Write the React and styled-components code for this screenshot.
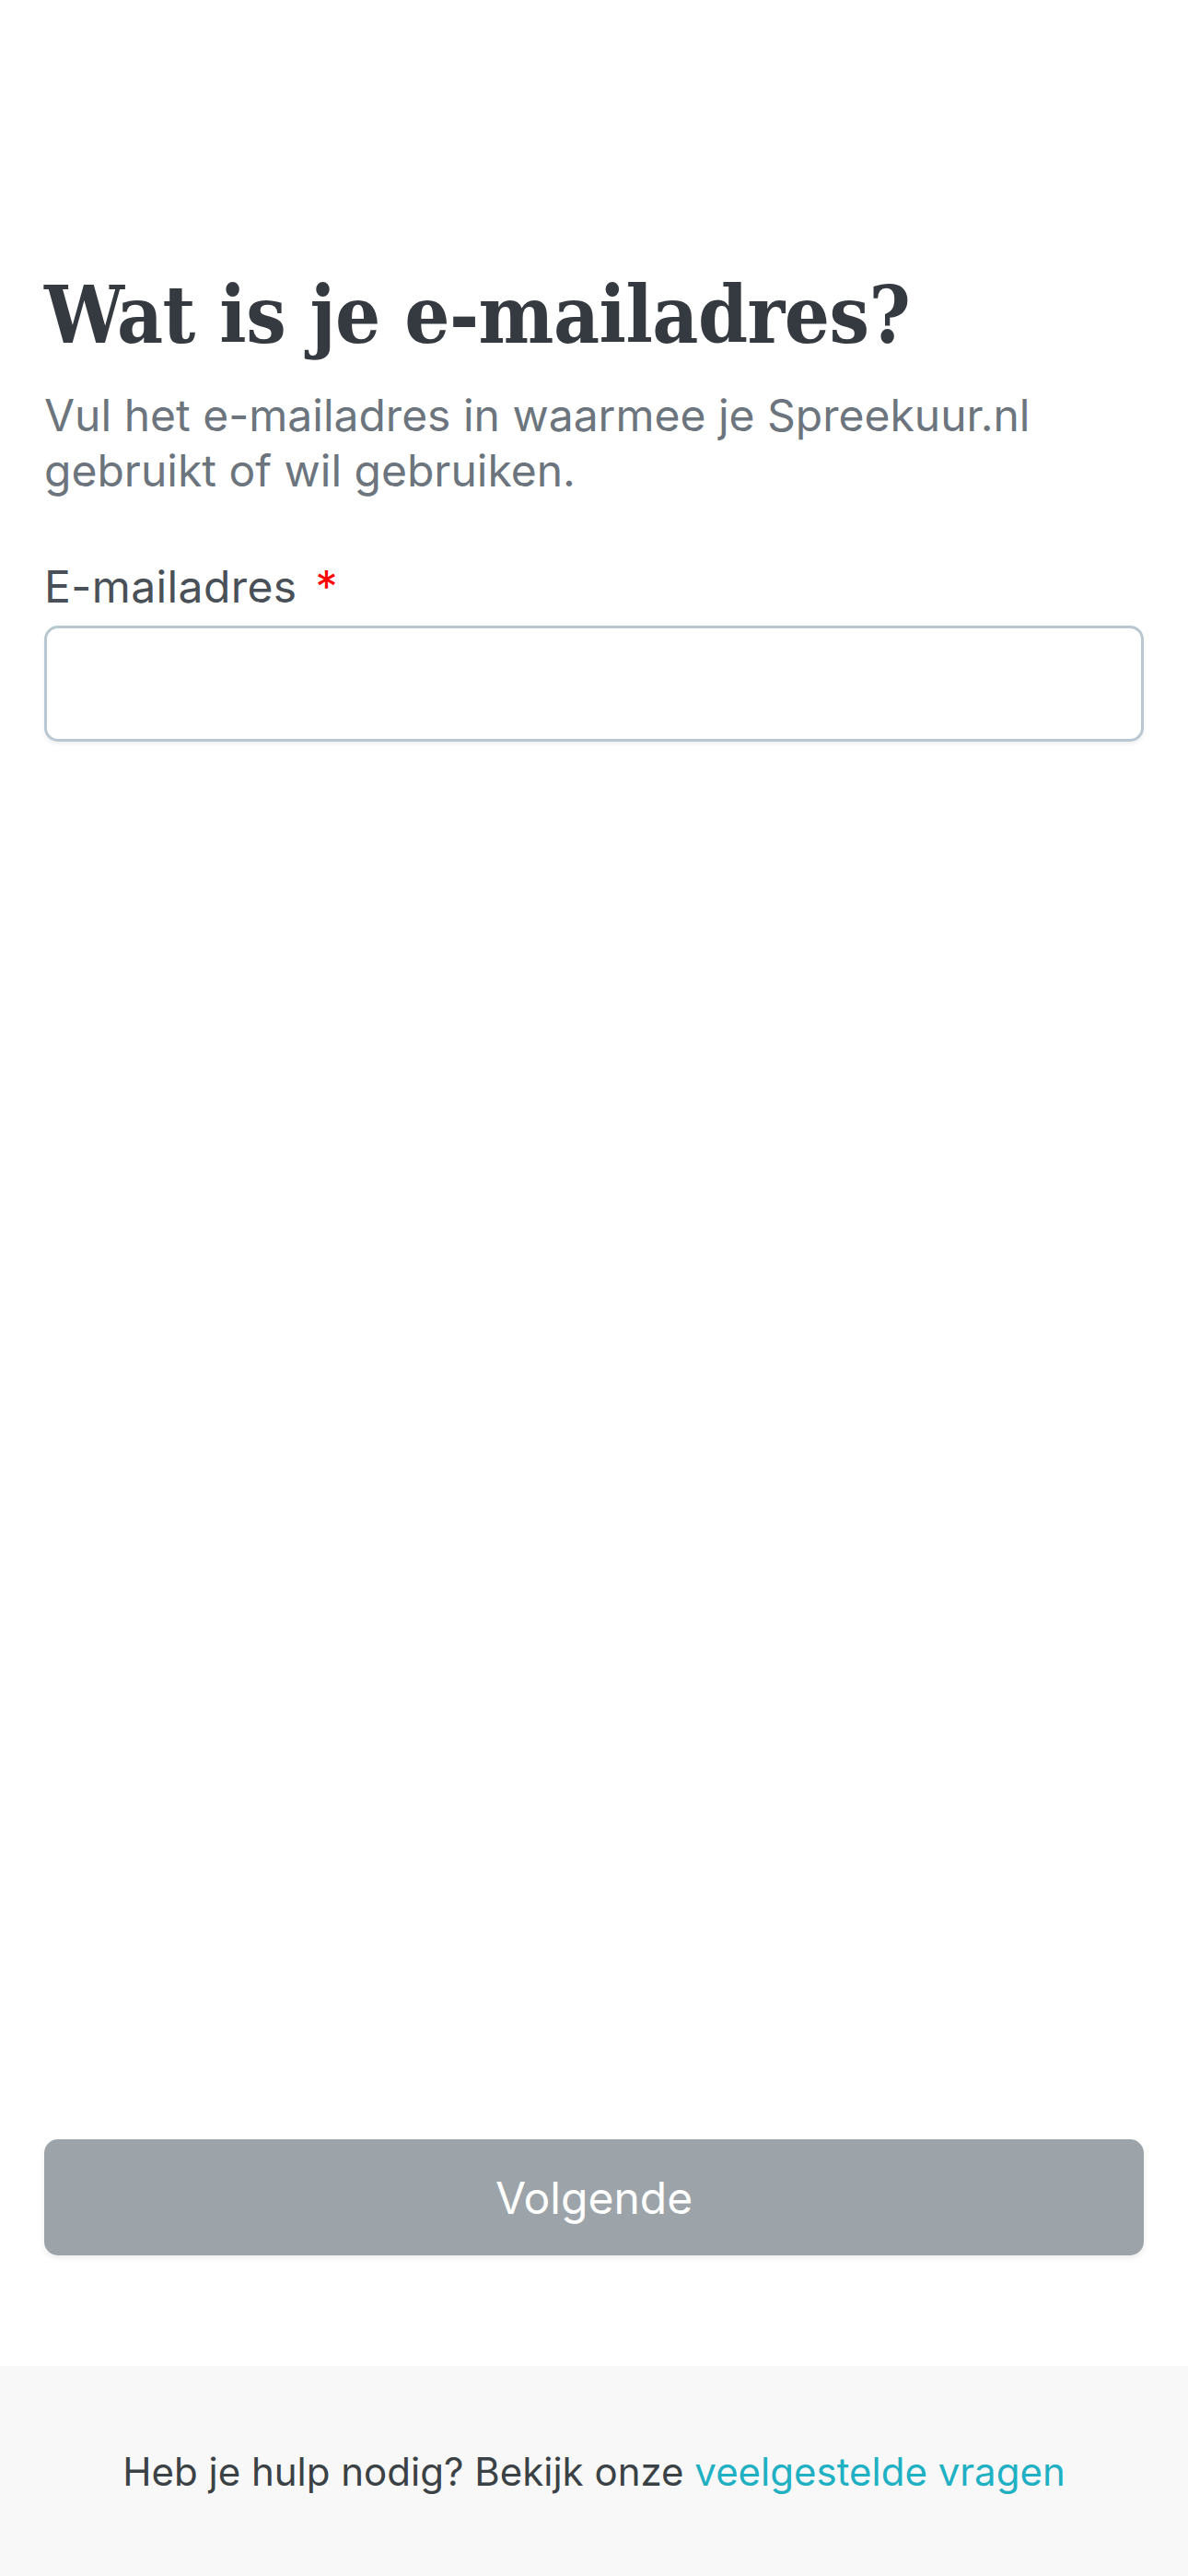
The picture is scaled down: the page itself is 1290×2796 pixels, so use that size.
import React from "react";
import styled, { createGlobalStyle } from "styled-components";

const GlobalStyle = createGlobalStyle`
  html, body {
    margin: 0;
    padding: 0;
    background: #ffffff;
  }
  body {
    font-family: Inter, "Noto Sans", "Liberation Sans", sans-serif;
  }
  * {
    box-sizing: border-box;
  }
`;

const Page = styled.div`
  min-height: 2796px;
  display: flex;
  flex-direction: column;
`;

const Main = styled.main`
  flex: 1;
  display: flex;
  flex-direction: column;
  padding: 287px 48px 120px;
`;

// koptekst: slab serif, vet
const Title = styled.h1`
  margin: 0;
  font-family: "DejaVu Serif Condensed", "DejaVu Serif", serif;
  font-stretch: condensed;
  font-weight: 700;
  font-size: 86px;
  line-height: 110px;
  color: #343a40;
  letter-spacing: -0.5px;
`;

const Intro = styled.p`
  margin: 24px 0 0;
  font-size: 48px;
  line-height: 60px;
  color: #6c757d;
`;

const Field = styled.div`
  margin-top: 68px;
  display: flex;
  flex-direction: column;
  gap: 14px;
`;

const Label = styled.label`
  font-size: 48px;
  line-height: 56px;
  letter-spacing: 0.4px;
  color: #495057;
`;

const Required = styled.span`
  color: #ff0000;
  margin-left: 20px;
`;

const Input = styled.input`
  width: 100%;
  height: 126px;
  border: 3px solid #b9c7d1;
  border-radius: 15px;
  padding: 0 36px;
  font-family: inherit;
  font-size: 46px;
  color: #343a40;
  background: #fff;
  box-shadow: 0 3px 4px rgba(0, 0, 0, 0.06);
  outline: none;
`;

const Spacer = styled.div`
  flex: 1;
`;

const Button = styled.button`
  width: 100%;
  height: 126px;
  border: none;
  border-radius: 15px;
  background: #9ca4a9;
  color: #ffffff;
  font-family: inherit;
  font-size: 48px;
  box-shadow: 0 3px 6px rgba(0, 0, 0, 0.08);
  cursor: not-allowed;
`;

const Footer = styled.footer`
  height: 228px;
  background: #f8f8f8;
  display: flex;
  align-items: center;
  justify-content: center;
  font-size: 42px;
  color: #3b4246;
`;

const Link = styled.a`
  color: #1fb0c4;
  text-decoration: none;
`;

export default function App() {
  return (
    <>
      <GlobalStyle />
      <Page>
        <Main>
          <Title>Wat is je e-mailadres?</Title>
          <Intro>
            Vul het e-mailadres in waarmee je Spreekuur.nl gebruikt of wil
            gebruiken.
          </Intro>
          <Field>
            <Label htmlFor="email">
              E-mailadres<Required>*</Required>
            </Label>
            <Input id="email" type="email" />
          </Field>
          <Spacer />
          <Button type="button" disabled>
            Volgende
          </Button>
        </Main>
        <Footer>
          <span>
            Heb je hulp nodig? Bekijk onze{" "}
            <Link href="#">veelgestelde vragen</Link>
          </span>
        </Footer>
      </Page>
    </>
  );
}
